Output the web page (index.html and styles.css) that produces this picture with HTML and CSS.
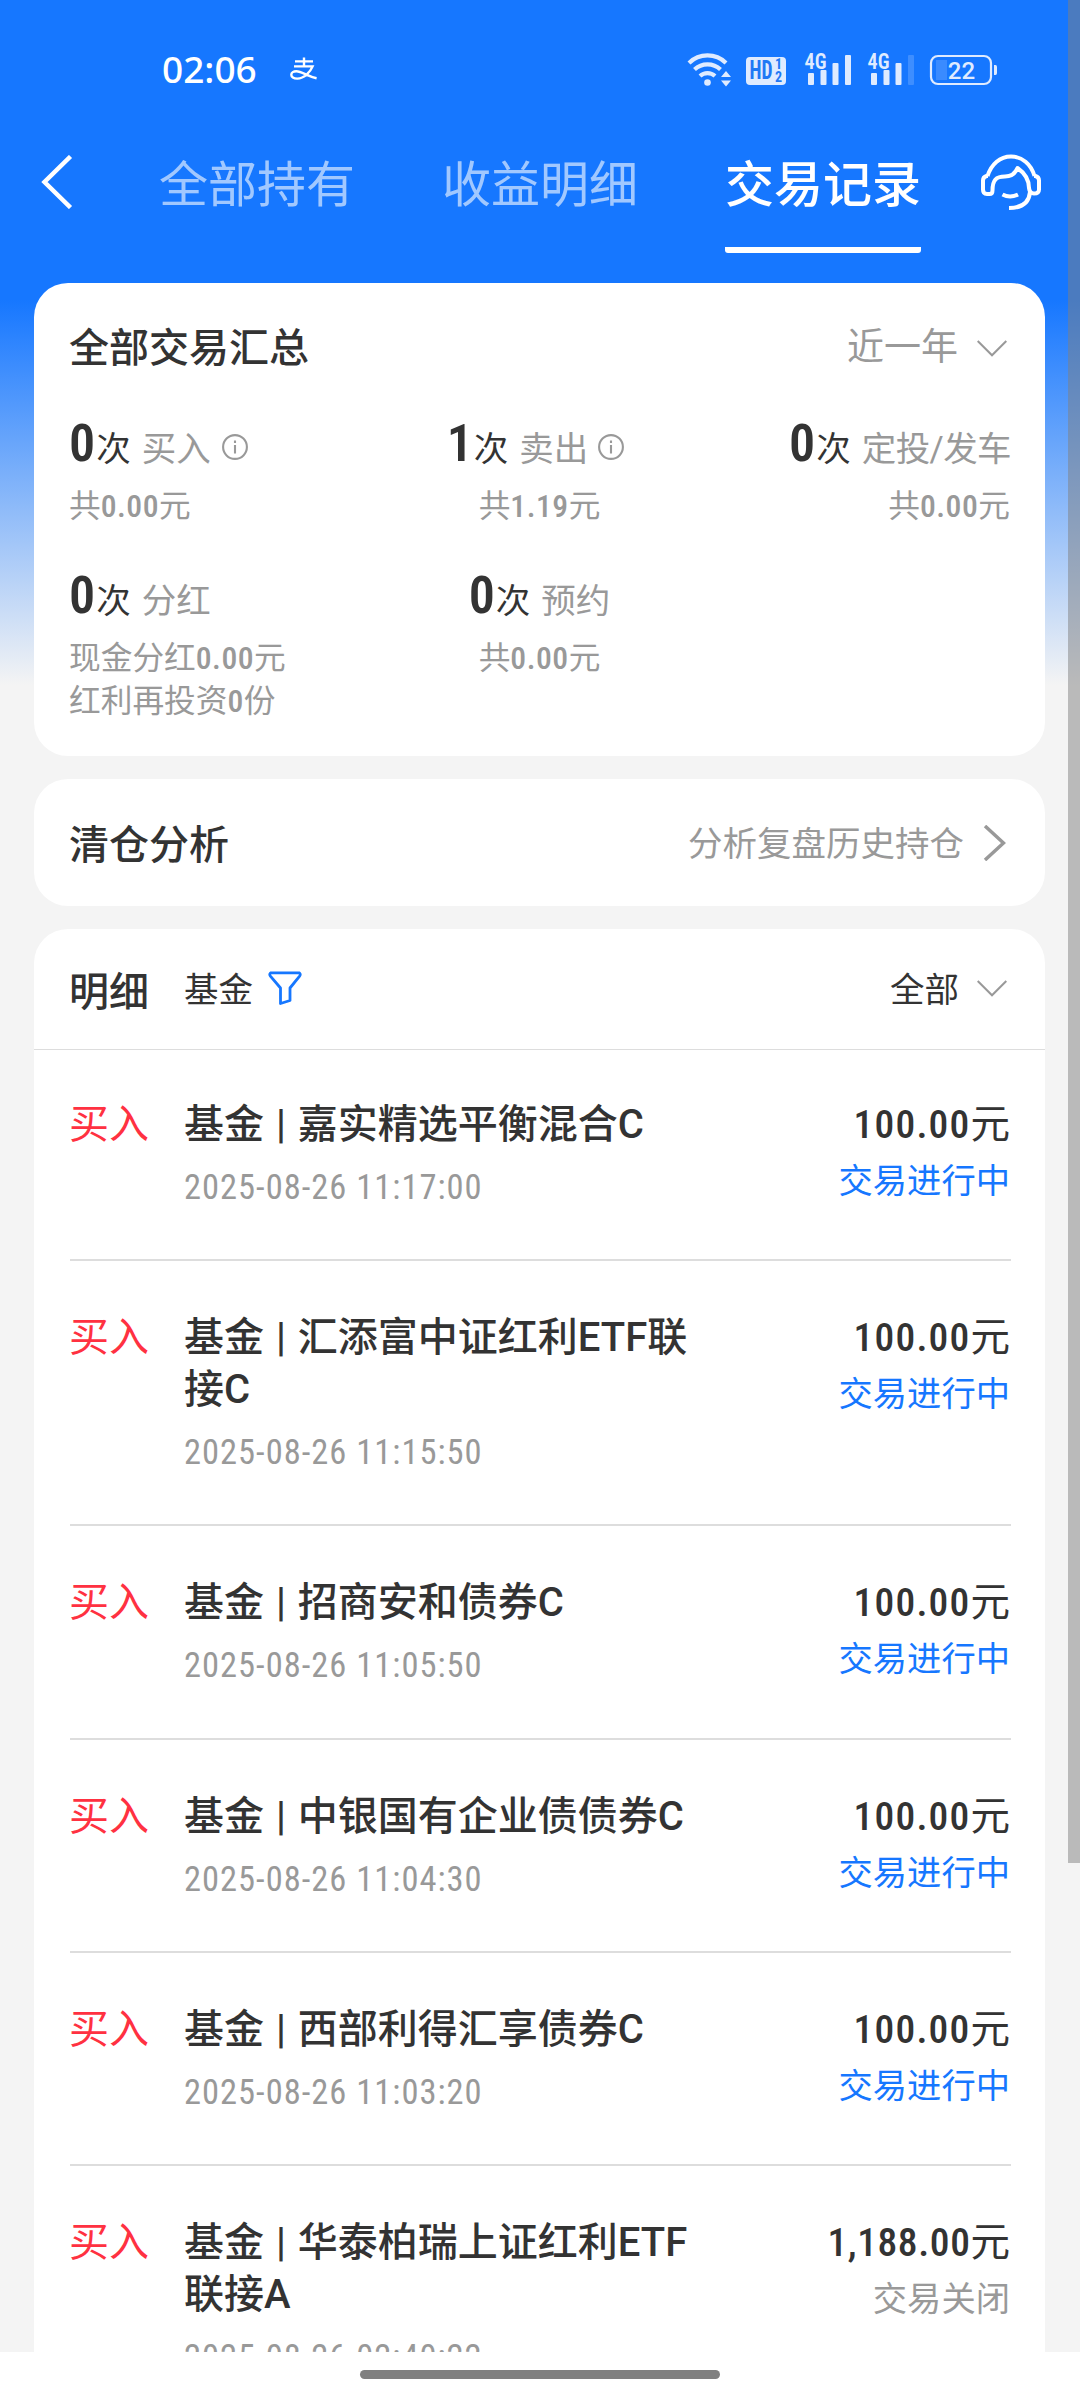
FILE: index.html
```html
<!DOCTYPE html>
<html lang="zh-CN">
<head>
<meta charset="utf-8">
<title>交易记录</title>
<link rel="stylesheet" href="styles.css">
</head>
<body>
<div class="screen">
  <div class="viewport">
    <header class="statusbar">
      <span class="clock">02:06</span>
      <svg class="alipay" width="28" height="24" viewBox="0 0 28 24" fill="none" stroke="#fff" stroke-width="2.4"><path d="M5 4.4h18M14 0.4v8.4M4 9.4h18.6C20.500 14.500 14.500 21.600 7.200 21.600C3.500 21.600 1.300 20 1.300 17.700C1.300 15.500 3.500 14.200 6.300 14.200C12 14.200 17.500 19.500 26.600 21.200"/></svg>
      <svg class="sysicons" width="314" height="44" viewBox="0 -4 314 44">
        <g fill="none" stroke="#dfebff" stroke-width="4.2">
          <path d="M2 12a26.500 26.500 0 0 1 37 0"/>
          <path d="M7.500 18.500a19 19 0 0 1 26 0"/>
          <path d="M13 25a11 11 0 0 1 15 0"/>
        </g>
        <g fill="#dfebff">
          <circle cx="20.500" cy="31.500" r="3.300"/>
          <path d="M34 26l5-6 5 6zM34 29.500h10l-5 6z"/>
          <rect x="59" y="6" width="40" height="28" rx="4"/>
          <rect x="121" y="22" width="6" height="12" rx="1"/>
          <rect x="133.500" y="19" width="6" height="15" rx="1"/>
          <rect x="145.500" y="12" width="6" height="22" rx="1"/>
          <rect x="158" y="4" width="6" height="30" rx="1"/>
          <rect x="184" y="22" width="6" height="12" rx="1"/>
          <rect x="196.500" y="19" width="6" height="15" rx="1"/>
          <rect x="208.500" y="12" width="6" height="22" rx="1"/>
          <rect x="221" y="4" width="6" height="30" rx="1" opacity=".2"/>
          <path d="M307 14h1.500q1.500 0 1.500 2v6q0 2-1.500 2H307z"/>
          <rect x="249" y="9" width="11" height="20" opacity=".18"/>
        </g>
        <rect x="244" y="5" width="60" height="28" rx="7" fill="none" stroke="#dfebff" stroke-width="2.200"/>
        <text class="sys hd" x="62.500" y="28" textLength="23" lengthAdjust="spacingAndGlyphs">HD</text>
        <text class="sys sim" x="88" y="17.500">1</text>
        <text class="sys sim" x="88" y="31">2</text>
        <text class="sys net" x="117.500" y="17.500" textLength="22" lengthAdjust="spacingAndGlyphs">4G</text>
        <text class="sys net" x="180.500" y="17.500" textLength="22" lengthAdjust="spacingAndGlyphs">4G</text>
        <text class="sys level" x="274.500" y="27.500" text-anchor="middle">22</text>
      </svg>
    </header>

    <nav class="tabs">
      <svg class="back" width="34" height="54" viewBox="0 0 34 54" fill="none" stroke="#fff" stroke-width="4.500"><path d="M30.500 1.500L4.500 27l26 25.500"/></svg>
      <div class="tab">全部持有</div>
      <div class="tab">收益明细</div>
      <div class="tab active">交易记录</div>
      <svg class="service" width="60" height="58" viewBox="0 0 60 58" fill="none" stroke="#fff" stroke-width="4" stroke-linejoin="round">
        <path d="M6.500 22C10.500 10 19 2.500 30 2.500s20 7.500 23.500 19.500"/>
        <path d="M7 22h-1.500Q2 23 2 26.500v9q0 4.500 4 4.500h2.500q3 0 3-3.500C11.500 26 15 22.500 24 22.500c6.500 0 10-2.500 12.500-8.500C45 20 48 26 48 34q.5 5.500 5 5.500Q58 39.500 58 35.500v-9q0-3.500-3.500-4.500H53"/>
        <path d="M49 38C48 49 40 54 28 54M21.500 40.500q7.500 4 15.500 0"/>
      </svg>
    </nav>

    <main class="cards">
      <section class="card summary">
        <div class="card-head">
          <h2>全部交易汇总</h2>
          <div class="period">近一年<svg class="down" width="30" height="17" viewBox="0 0 30 17"><path d="M.7 1L15 15.300 29.300 1"/></svg></div>
        </div>
        <div class="stats">
          <div class="stat">
            <div class="count"><b>0</b>次<span>买入</span><svg class="info" width="26" height="26" viewBox="0 0 26 26"><circle cx="13" cy="13" r="11.900"/><path d="M13 6.500v2.600M13 11v8.500"/></svg></div>
            <div class="sum">共<i>0.00</i>元</div>
          </div>
          <div class="stat mid">
            <div class="count"><b>1</b>次<span>卖出</span><svg class="info" width="26" height="26" viewBox="0 0 26 26"><circle cx="13" cy="13" r="11.900"/><path d="M13 6.500v2.600M13 11v8.500"/></svg></div>
            <div class="sum">共<i>1.19</i>元</div>
          </div>
          <div class="stat end">
            <div class="count"><b>0</b>次<span>定投/发车</span></div>
            <div class="sum">共<i>0.00</i>元</div>
          </div>
          <div class="stat">
            <div class="count"><b>0</b>次<span>分红</span></div>
            <div class="sum">现金分红<i>0.00</i>元<br>红利再投资<i>0</i>份</div>
          </div>
          <div class="stat mid">
            <div class="count"><b>0</b>次<span>预约</span></div>
            <div class="sum">共<i>0.00</i>元</div>
          </div>
        </div>
      </section>

      <section class="card analysis">
        <h2>清仓分析</h2>
        <div class="link"><span>分析复盘历史持仓</span><svg width="23" height="36" viewBox="0 0 23 36" fill="none" stroke="#999" stroke-width="3.500"><path d="M2 1l18.500 17L2 35"/></svg></div>
      </section>

      <section class="card detail">
        <div class="filter">
          <h2>明细</h2>
          <span class="kind">基金</span>
          <svg width="34" height="34" viewBox="0 0 34 34" fill="none" stroke="#1677ff" stroke-width="2.800" stroke-linejoin="round"><path d="M3 1.800h28q2 1.200.8 3L22 17v12.500l-9.500 3V17L2.200 4.800Q1 3 3 1.800z"/></svg>
          <div class="all"><span>全部</span><svg class="down" width="30" height="17" viewBox="0 0 30 17"><path d="M.7 1L15 15.300 29.300 1"/></svg></div>
        </div>
        <ul class="records">
          <li><span class="type">买入</span><div class="body"><h3>基金 | 嘉实精选平衡混合C</h3><time>2025-08-26 11:17:00</time></div><div class="money"><div class="amount">100.00<span>元</span></div><div class="state">交易进行中</div></div></li>
          <li><span class="type">买入</span><div class="body"><h3>基金 | 汇添富中证红利ETF联接C</h3><time>2025-08-26 11:15:50</time></div><div class="money"><div class="amount">100.00<span>元</span></div><div class="state">交易进行中</div></div></li>
          <li><span class="type">买入</span><div class="body"><h3>基金 | 招商安和债券C</h3><time>2025-08-26 11:05:50</time></div><div class="money"><div class="amount">100.00<span>元</span></div><div class="state">交易进行中</div></div></li>
          <li><span class="type">买入</span><div class="body"><h3>基金 | 中银国有企业债债券C</h3><time>2025-08-26 11:04:30</time></div><div class="money"><div class="amount">100.00<span>元</span></div><div class="state">交易进行中</div></div></li>
          <li><span class="type">买入</span><div class="body"><h3>基金 | 西部利得汇享债券C</h3><time>2025-08-26 11:03:20</time></div><div class="money"><div class="amount">100.00<span>元</span></div><div class="state">交易进行中</div></div></li>
          <li><span class="type">买入</span><div class="body"><h3>基金 | 华泰柏瑞上证红利ETF联接A</h3><time>2025-08-26 02:40:22</time></div><div class="money"><div class="amount grouped">1,188.00<span>元</span></div><div class="state closed">交易关闭</div></div></li>
        </ul>
      </section>
    </main>
    <div class="scrollbar"></div>
  </div>
  <footer class="navbar"><div class="home"></div></footer>
</div>
</body>
</html>
```
FILE: styles.css
```css
* { box-sizing: border-box; margin: 0; padding: 0; }

body {
  font-family: Roboto, "Noto Sans CJK SC", sans-serif;
  font-weight: 400;
  color: #333;
  background: #fff;
}

svg { display: block; flex: none; }
b, i { font-style: normal; }

.screen { width: 1080px; height: 2400px; display: flex; flex-direction: column; overflow: hidden; }

.viewport {
  position: relative;
  height: 2352px;
  overflow: hidden;
  background: linear-gradient(#1677ff 0, #1677ff 300px, #f4f4f4 685px) #f4f4f4;
}

/* system status bar */
.statusbar { height: 138px; padding: 0 79px 0 162px; display: flex; align-items: center; }
.clock { font: 500 37px/40px "Noto Sans", sans-serif; color: #fff; width: 128px; white-space: nowrap; }
.sysicons { margin: 0 0 0 auto; }
.sys { font-family: Roboto, sans-serif; font-stretch: 75%; fill: #dfebff; }
.hd { font-size: 25px; font-weight: 700; fill: #1f78f5; }
.sim { font-size: 14px; font-weight: 700; fill: #1f78f5; }
.net { font-size: 22px; font-weight: 600; }
.level { font-stretch: 100%; font-size: 24px; font-weight: 500; }

/* page tabs */
.tabs { height: 115px; padding: 0 39px 0 40px; display: flex; align-items: flex-start; }
.back { margin: 17px 85px 0 0; }
.tab { width: 196px; height: 115px; margin-right: 87px; padding-top: 16px; font-size: 49px; line-height: 64px; text-align: center; white-space: nowrap; color: rgba(255, 255, 255, .6); }
.tab.active { margin-right: 0; font-weight: 500; color: #fff; background: linear-gradient(#fff, #fff) left bottom / 100% 6px no-repeat; border-radius: 0 0 3px 3px; }
.service { margin: 16px 0 0 auto; }

/* cards */
.cards { padding: 30px 35px 0 34px; display: flex; flex-direction: column; gap: 23px; }
.card { background: #fff; border-radius: 34px; }
h2 { font-size: 40px; line-height: 56px; font-weight: 500; white-space: nowrap; }
.down { fill: none; stroke: #999; stroke-width: 2; }

.summary { height: 473px; padding: 37px 35px 0; }
.card-head { display: flex; justify-content: space-between; align-items: center; }
.card-head h2 { position: relative; top: 1px; }
.period { display: flex; align-items: center; gap: 19px; padding-right: 3px; font-size: 37px; line-height: 56px; color: #999; }
.stats { margin-top: 36px; display: grid; grid-template-columns: 1fr 1fr 1fr; row-gap: 37px; }
.stat { display: flex; flex-direction: column; align-items: flex-start; }
.stat.mid { align-items: center; }
.stat.end { align-items: flex-end; }
.count { height: 64px; display: flex; align-items: baseline; font-size: 34.500px; line-height: 64px; white-space: nowrap; }
.count b { font-size: 52px; font-weight: 620; font-stretch: 75%; letter-spacing: 1px; }
.count span { margin-left: 11px; color: #999; }
.end .count span { letter-spacing: -.6px; margin-right: -1px; }
.info { margin-left: 11px; align-self: center; position: relative; top: 3px; fill: none; stroke: #999; stroke-width: 2.100; }
.mid .info { margin: 0 8px 0 10px; }
.sum { margin: 9px 0 -1px; font-size: 31.700px; line-height: 43px; color: #999; white-space: nowrap; }
.sum i { font-weight: 500; font-stretch: 75%; letter-spacing: .5px; }

.analysis { height: 127px; padding: 0 39px 0 35px; display: flex; justify-content: space-between; align-items: center; }
.analysis h2 { padding-top: 6px; }
.link { display: flex; align-items: center; gap: 19px; font-size: 34.500px; color: #999; }
.link span { padding-bottom: 4px; }

.detail { height: 1500px; }
.filter { height: 121px; padding: 0 38px 2px 35px; display: flex; align-items: center; border-bottom: 1.500px solid #ddd; }
.filter h2 { padding-top: 10px; }
.kind { margin: 0 15px 2px 35px; font-size: 34.500px; }
.all { margin-left: auto; display: flex; align-items: center; gap: 18px; font-size: 34.500px; }
.all span { padding-bottom: 3px; }

.records { list-style: none; padding: 0 34px 0 36px; }
.records li { display: flex; padding: 51px 0 48.400px; border-bottom: 2px solid #ddd; white-space: nowrap; }
.records li:first-child { padding-top: 48.500px; }
.type { width: 115px; margin-left: -1px; font-size: 40px; line-height: 52px; color: #ff3141; }
.body { width: 512px; white-space: normal; }
h3 { font-size: 40px; line-height: 52px; font-weight: 500; word-spacing: 2px; line-break: anywhere; }
time { display: block; margin-top: 14px; padding-bottom: 2px; font-size: 34.500px; line-height: 44px; color: #999; font-stretch: 75%; letter-spacing: 1px; }
.money { margin: 0 1px 0 auto; text-align: right; }
.amount { font-size: 39.500px; line-height: 52px; font-weight: 500; font-stretch: 75%; letter-spacing: 1.200px; }
.amount.grouped { letter-spacing: .600px; }
.amount span { font-weight: 400; letter-spacing: 0; }
.state { margin-top: 7px; font-size: 34.300px; line-height: 46px; color: #1677ff; }
.state.closed { color: #999; }

.scrollbar { position: absolute; top: 0; right: 0; width: 12px; height: 1863px; background: rgba(128, 128, 128, .5); }

/* gesture bar */
.navbar { height: 48px; background: #fff; display: flex; justify-content: center; align-items: center; }
.home { width: 360px; height: 9px; border-radius: 5px; background: #808080; margin-bottom: 3px; }
```
